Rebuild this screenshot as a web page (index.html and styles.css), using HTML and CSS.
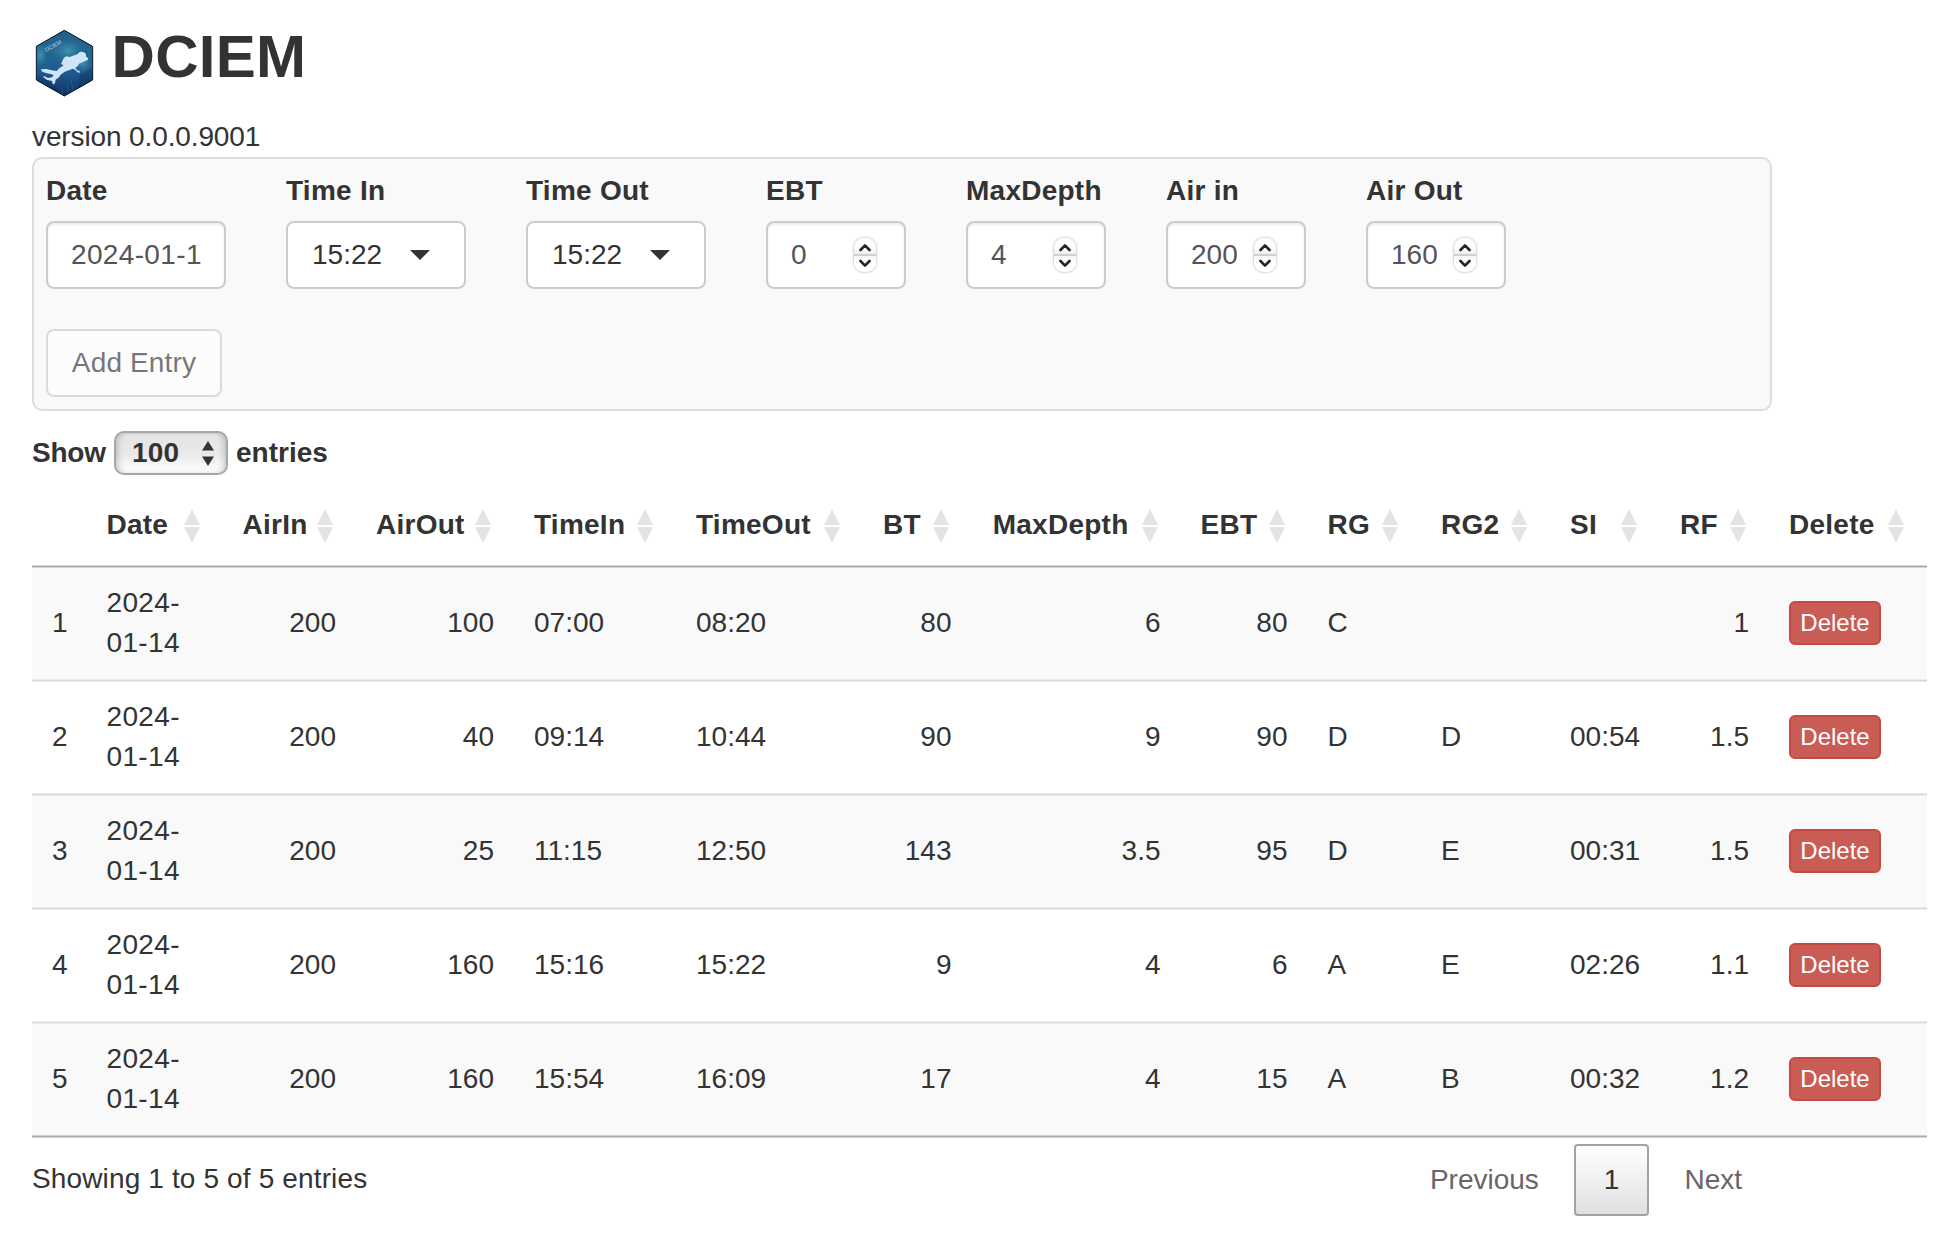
FILE: index.html
```html
<!DOCTYPE html>
<html lang="en">
<head>
<meta charset="utf-8">
<title>DCIEM</title>
<link rel="stylesheet" href="styles.css">
</head>
<body>
<svg width="0" height="0" class="defs" aria-hidden="true">
  <symbol id="spin" viewBox="0 0 22 34">
    <path d="M6.5 12 11 7.4l4.5 4.6M6.5 23 11 27.600l4.500-4.600" fill="none" stroke="#262626" stroke-width="2.6" stroke-linecap="round" stroke-linejoin="round"/>
  </symbol>
</svg>
<header class="header">
  <svg class="logo" viewBox="42 27 177 204" aria-label="DCIEM logo">
    <defs>
      <linearGradient id="sea" x1="0" y1="0" x2="0" y2="1">
        <stop offset="0" stop-color="#1f5f88"/><stop offset=".3" stop-color="#22688f"/><stop offset=".62" stop-color="#1f5c91"/><stop offset="1" stop-color="#0f2f60"/>
      </linearGradient>
      <radialGradient id="glow"><stop offset="0" stop-color="#5cb3c0" stop-opacity=".55"/><stop offset="1" stop-color="#3c95ad" stop-opacity="0"/></radialGradient>
      <clipPath id="hex"><path d="M130 31l85 48v101l-85 48-84-48V79z"/></clipPath>
    </defs>
    <g clip-path="url(#hex)">
      <rect x="42" y="27" width="177" height="204" fill="url(#sea)"/>
      <ellipse cx="140" cy="92" rx="48" ry="36" fill="url(#glow)"/>
      <ellipse cx="58" cy="105" rx="22" ry="36" fill="url(#glow)"/>
      <ellipse cx="185" cy="130" rx="30" ry="28" fill="url(#glow)"/>
      <path d="M42 165l40 18 30 30v20H42zM176 165l43-25v60l-50 20z" fill="#0c2b58" opacity=".35"/>
      <path d="M138 188l5 36M150 178l6 34M122 196l3 26" stroke="#3d80b2" stroke-width="2" opacity=".5"/>
    </g>
    <path d="M130 31l85 48v101l-85 48-84-48V79z" fill="none" stroke="#06121f" stroke-width="3"/>
    <text class="logo-text" x="76" y="96" transform="rotate(-30 76 96)">DCIEM</text>
    <path d="M60 148l16-1 16 4 15 2 9-9 12-8-8-4 8-17 7-6 10 2 24-8 6-6 4-2 9 1 7 6v8l7 4-2 6-12 5-14 6-4 8-7 4 5 8 8 2 0 6-6-2-8-8-8-3-8 4-15 5-12 9-5 8-10 7-2 10-6 5-3-11-16-4-10-8 2-3 12 6 12-2 5-7-9-3-15-3-12-5z" fill="#cfe4f8"/>
  </svg>
  <h1 class="title">DCIEM</h1>
</header>
<div class="version">version 0.0.0.9001</div>

<section class="panel">
  <div class="fields">
    <div class="field"><label>Date</label><div class="control input date">2024-01-1</div></div>
    <div class="field"><label>Time In</label><div class="control picker">15:22<i class="caret"></i></div></div>
    <div class="field"><label>Time Out</label><div class="control picker">15:22<i class="caret"></i></div></div>
    <div class="field num"><label>EBT</label><div class="control input">0<svg class="spinner"><use href="#spin"/></svg></div></div>
    <div class="field num"><label>MaxDepth</label><div class="control input">4<svg class="spinner"><use href="#spin"/></svg></div></div>
    <div class="field num"><label>Air in</label><div class="control input">200<svg class="spinner"><use href="#spin"/></svg></div></div>
    <div class="field num"><label>Air Out</label><div class="control input">160<svg class="spinner"><use href="#spin"/></svg></div></div>
  </div>
  <button class="add" disabled>Add Entry</button>
</section>

<div class="length">
  <span>Show</span>
  <div class="select">100<svg width="12" height="25" viewBox="0 0 12 25"><path d="M6 0l6 9.500H0zM6 25l6-9.500H0z" fill="#333"/></svg></div>
  <span>entries</span>
</div>

<table class="table">
  <colgroup>
    <col style="width:54.5px"><col style="width:136px"><col style="width:133.5px"><col style="width:158px"><col style="width:162px"><col style="width:187px"><col style="width:108.5px"><col style="width:209px"><col style="width:127px"><col style="width:113.5px"><col style="width:129px"><col style="width:110px"><col style="width:109px"><col style="width:158px">
  </colgroup>
  <thead>
    <tr><th></th><th class="s">Date</th><th class="s r">AirIn</th><th class="s r">AirOut</th><th class="s">TimeIn</th><th class="s">TimeOut</th><th class="s r">BT</th><th class="s r">MaxDepth</th><th class="s r">EBT</th><th class="s">RG</th><th class="s">RG2</th><th class="s">SI</th><th class="s r">RF</th><th class="s">Delete</th></tr>
  </thead>
  <tbody>
    <tr><td>1</td><td class="date">2024-<br>01-14</td><td class="r">200</td><td class="r">100</td><td>07:00</td><td>08:20</td><td class="r">80</td><td class="r">6</td><td class="r">80</td><td>C</td><td></td><td></td><td class="r">1</td><td><button class="del">Delete</button></td></tr>
    <tr><td>2</td><td class="date">2024-<br>01-14</td><td class="r">200</td><td class="r">40</td><td>09:14</td><td>10:44</td><td class="r">90</td><td class="r">9</td><td class="r">90</td><td>D</td><td>D</td><td>00:54</td><td class="r">1.5</td><td><button class="del">Delete</button></td></tr>
    <tr><td>3</td><td class="date">2024-<br>01-14</td><td class="r">200</td><td class="r">25</td><td>11:15</td><td>12:50</td><td class="r">143</td><td class="r">3.5</td><td class="r">95</td><td>D</td><td>E</td><td>00:31</td><td class="r">1.5</td><td><button class="del">Delete</button></td></tr>
    <tr><td>4</td><td class="date">2024-<br>01-14</td><td class="r">200</td><td class="r">160</td><td>15:16</td><td>15:22</td><td class="r">9</td><td class="r">4</td><td class="r">6</td><td>A</td><td>E</td><td>02:26</td><td class="r">1.1</td><td><button class="del">Delete</button></td></tr>
    <tr><td>5</td><td class="date">2024-<br>01-14</td><td class="r">200</td><td class="r">160</td><td>15:54</td><td>16:09</td><td class="r">17</td><td class="r">4</td><td class="r">15</td><td>A</td><td>B</td><td>00:32</td><td class="r">1.2</td><td><button class="del">Delete</button></td></tr>
  </tbody>
</table>
<div class="rule"></div>

<footer class="footer">
  <div class="info">Showing 1 to 5 of 5 entries</div>
  <nav class="pager"><span class="page off">Previous</span><span class="page current">1</span><span class="page off">Next</span></nav>
</footer>
</body>
</html>
```
FILE: styles.css
```css
* { box-sizing: border-box; }
body {
  margin: 0;
  padding: 24px 29px 0 32px;
  background: #fff;
  color: #333;
  font: 28px/40px "Liberation Sans", Arial, sans-serif;
}
.defs { position: absolute; }
button { font-family: inherit; margin: 0; }

.header { display: flex; height: 92px; }
.logo { width: 59px; height: 68px; margin: 5px 0 0 2.5px; }
.logo-text { font: 17px "Liberation Sans", sans-serif; fill: #b5dcea; }
.title { margin: 0 0 0 18px; font-size: 60px; line-height: 66px; font-weight: 700; letter-spacing: .3px; }
.version { height: 41px; padding-top: 1px; letter-spacing: -.12px; }

.panel {
  width: 1740px;
  height: 254px;
  padding: 12px;
  border: 2px solid #dcdcdc;
  border-radius: 10px;
  background: #f9f9f9;
}
.fields { display: flex; gap: 60px; margin-bottom: 40px; }
.field { width: 180px; }
.field.num { width: 140px; }
.field label { display: block; margin-bottom: 10px; font-weight: 700; letter-spacing: .25px; white-space: nowrap; }
.control {
  display: flex;
  align-items: center;
  height: 68px;
  padding: 0 24px;
  border: 2px solid #ccc;
  border-radius: 8px;
  background: #fff;
  white-space: nowrap;
}
.input { color: #555; box-shadow: inset 0 2px 2px rgba(0, 0, 0, .075); }
.input.date { padding-left: 23px; }
.date { letter-spacing: .35px; }
.num .input { justify-content: space-between; padding: 0 28px 0 23px; }
.picker { gap: 28px; }
.caret { border: 10px solid transparent; border-top-color: #333; border-bottom: 0; }
.spinner {
  width: 22px;
  height: 34px;
  border-radius: 10px;
  background: linear-gradient(#fff 25%, #f1f1f1 46%, #d0d0d0 47%, #d0d0d0 52%, #f6f6f6 53%, #fff 75%);
  box-shadow: 0 0 2px 1px rgba(0, 0, 0, .17);
}
.add {
  display: block;
  width: 176px;
  height: 68px;
  padding: 0;
  border: 2px solid #ccc;
  border-radius: 8px;
  background: #fff;
  color: #333;
  font-size: 28px;
  line-height: 40px;
  letter-spacing: .15px;
  opacity: .65;
}

.length { display: flex; align-items: center; margin-top: 20px; height: 44px; font-weight: 700; }
.length span:first-child { width: 82px; letter-spacing: -.25px; }
.select {
  display: flex;
  align-items: center;
  justify-content: space-between;
  width: 114px;
  height: 44px;
  margin-right: 8px;
  padding: 0 12px 0 16px;
  border: 2px solid #a6a6a6;
  border-radius: 10px;
  background: linear-gradient(#e4e4e4, #e9e9e9 50%, #fff);
  box-shadow: inset 5px 0 6px -3px rgba(0, 0, 0, .2), inset -5px 0 6px -3px rgba(0, 0, 0, .2);
  letter-spacing: .2px;
}

.table { width: 1895px; margin-top: 10px; table-layout: fixed; border-collapse: separate; border-spacing: 0; }
th { height: 80px; padding: 0 52px 0 20px; text-align: left; letter-spacing: .25px; white-space: nowrap; }
th.s { position: relative; }
th.s::before, th.s::after {
  content: "";
  position: absolute;
  right: 23px;
  border: 8px solid transparent;
}
th.s::before { top: 24px; border-top: 0; border-bottom: 16px solid #e4e4e4; }
th.s::after { top: 42px; border-bottom: 0; border-top: 16px solid #e4e4e4; }
.r { text-align: right; }
td { height: 114px; padding: 18px 20px 16px; vertical-align: middle; white-space: nowrap; }
tbody tr { background: linear-gradient(#ececec 1px, #d8d8d8 1px, #d8d8d8 2px, #ececec 2px, #ececec 3px, #fff 3px); }
tbody tr:nth-child(odd) { background: linear-gradient(#ececec 1px, #d8d8d8 1px, #d8d8d8 2px, #ececec 2px, #ececec 3px, #f9f9f9 3px); }
tbody tr:first-child { background: linear-gradient(#d6d6d6 1px, #aaa 1px, #aaa 2px, #d2d2d2 2px, #d2d2d2 3px, #f9f9f9 3px); }
.rule { height: 3px; width: 1895px; background: linear-gradient(#d2d2d2 1px, #aaa 1px, #aaa 2px, #d6d6d6 2px); }
.del {
  display: block;
  width: 92px;
  height: 44px;
  padding: 0 0 1px;
  border: 2px solid #c54a42;
  border-radius: 6px;
  background: #c95c54;
  color: #fff;
  font-size: 24px;
  line-height: 36px;
}

.footer { display: flex; justify-content: space-between; width: 1741px; margin-top: 6px; }
.info { padding-top: 15px; letter-spacing: .14px; }
.pager { display: flex; gap: 4px; }
.page { height: 72px; padding: 14px 29px; border: 2px solid transparent; border-radius: 4px; color: #666; }
.current { padding: 14px 28px; border-color: #a2a2a2; background: linear-gradient(#fff, #e0e0e0); color: #333; }
```
